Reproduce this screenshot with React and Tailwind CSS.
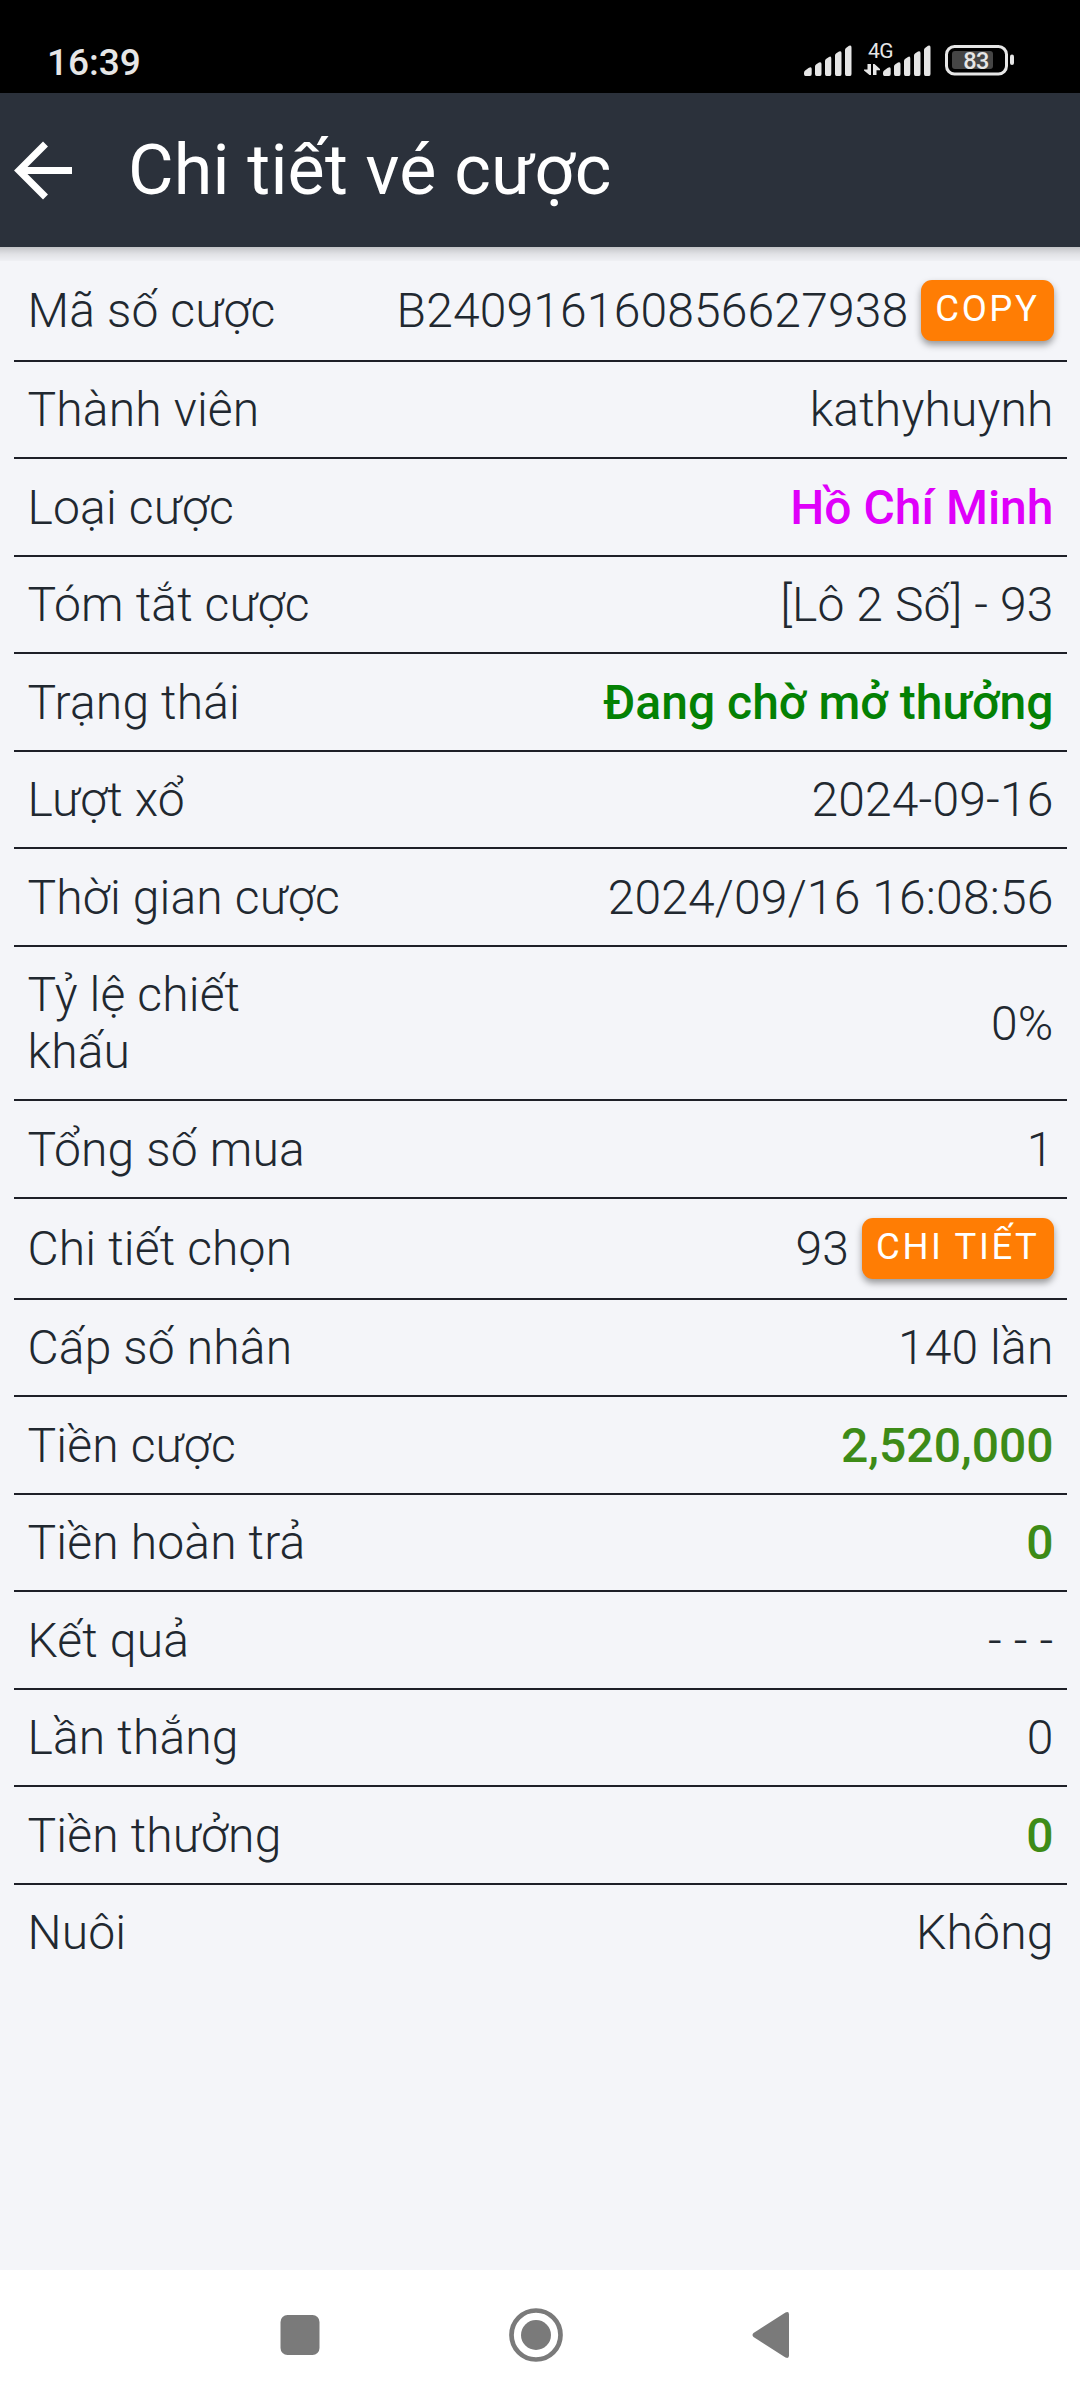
import React from "react";

const DARK = "text-[#212830] font-light tracking-[0.16px]";
const GREEN = "text-[#3d8b17] font-medium";

const rows = [
  { label: "Mã số cược", value: "B240916160856627938", button: "COPY", height: "h-[101px]" },
  { label: "Thành viên", value: "kathyhuynh", height: "h-[97px]" },
  { label: "Loại cược", value: "Hồ Chí Minh", tone: "text-[#df00fa] font-medium", height: "h-[98px]" },
  { label: "Tóm tắt cược", value: "[Lô 2 Số] - 93", height: "h-[97px]" },
  { label: "Trạng thái", value: "Đang chờ mở thưởng", tone: "text-[#048104] font-medium", height: "h-[98px]" },
  { label: "Lượt xổ", value: "2024-09-16", height: "h-[97px]" },
  { label: "Thời gian cược", value: "2024/09/16 16:08:56", height: "h-[98px]" },
  { label: "Tỷ lệ chiết khấu", value: "0%", height: "h-[154px]" },
  { label: "Tổng số mua", value: "1", height: "h-[98px]" },
  { label: "Chi tiết chọn", value: "93", button: "CHI TIẾT", height: "h-[101px]" },
  { label: "Cấp số nhân", value: "140 lần", height: "h-[97px]" },
  { label: "Tiền cược", value: "2,520,000", tone: GREEN, height: "h-[98px]" },
  { label: "Tiền hoàn trả", value: "0", tone: GREEN, height: "h-[97px]" },
  { label: "Kết quả", value: "- - -", height: "h-[98px]" },
  { label: "Lần thắng", value: "0", height: "h-[97px]" },
  { label: "Tiền thưởng", value: "0", tone: GREEN, height: "h-[98px]" },
  { label: "Nuôi", value: "Không", height: "h-[95px]", last: true },
];

function SignalBars() {
  return (
    <svg width="48" height="31" viewBox="0 0 48 31" fill="#e6e6e6">
      <path d="M0 28Q0 26.5 1.2 25.6L4.5 23Q7.7 21 7.7 24V29Q7.7 31 6 31H1.5Q0 31 0 29Z" />
      <path d="M11 21.5Q11 20 12.3 19.2L15 17.5Q17.5 16.5 17.5 19V29Q17.5 31 16 31H12.5Q11 31 11 29Z" />
      <path d="M21 16Q21 14.6 22.3 13.8L25 12Q27.3 10.8 27.3 13.4V29Q27.3 31 25.8 31H22.5Q21 31 21 29Z" />
      <path d="M31 10.5Q31 9 32.3 8.2L35 6.5Q37.5 5.3 37.5 8V29Q37.5 31 36 31H32.5Q31 31 31 29Z" />
      <path d="M41 5Q41 3.6 42.3 2.7L45 .8Q47.5-.5 47.5 2.4V29Q47.5 31 46 31H42.5Q41 31 41 29Z" />
    </svg>
  );
}

function StatusBar() {
  return (
    <div className="flex h-[93px] items-start justify-between bg-black pl-[47px] pr-[66px] text-[#e6e6e6]">
      <span className="mt-[42px] text-[37px] font-medium leading-[42px]">16:39</span>
      <div className="mt-[42px] flex h-[34px] items-end">
        <SignalBars />
        <div className="relative ml-[12px] h-[34px] w-[19px]">
          <span className="absolute left-[4px] top-[-1px] text-[21px] leading-[21px] tracking-[-0.5px]">4G</span>
          <svg className="absolute left-0 top-[22px]" width="16" height="12" viewBox="0 0 16 12" fill="#e6e6e6">
            <path d="M3.5 0H7V11H5.5L0 6.5V5.5H3.5Z" />
            <path d="M9 0H10.5L16 5V6.3H12.5V11H9Z" />
          </svg>
        </div>
        <SignalBars />
        <svg className="ml-[14px]" width="69" height="31" viewBox="0 0 69 31">
          <rect x="1.5" y="1.5" width="60" height="27.5" rx="8" fill="none" stroke="#e6e6e6" strokeWidth="3" />
          <rect x="7" y="6" width="41" height="18" rx="3" fill="#454545" />
          <rect x="65" y="9.5" width="4" height="10.5" rx="2" fill="#e6e6e6" />
          <text x="31" y="24" textAnchor="middle" fontSize="23.5" fontWeight="500" letterSpacing="-0.5" fill="#e6e6e6">83</text>
        </svg>
      </div>
    </div>
  );
}

function Header() {
  return (
    <header className="flex h-[154px] items-center bg-[#2b313b]">
      <svg className="ml-[14px]" width="59" height="60" viewBox="0 0 59 60" fill="none" stroke="#fff" strokeWidth="7">
        <path d="M58 30.5H7M31.5 4L5 30.5L31.5 57" />
      </svg>
      <h1 className="ml-[55px] text-[70px] font-normal leading-[80px] tracking-[0.2px] text-white">Chi tiết vé cược</h1>
    </header>
  );
}

function Row({ label, value, tone, button, height, last }) {
  return (
    <div
      className={`flex shrink-0 items-center justify-between pl-[13.5px] pr-[13.5px] text-[48px] leading-[57px] ${height} ${
        last ? "" : "border-b-2 border-[#1e2028]"
      }`}
    >
      <div className={`${DARK} ${label.startsWith("Tỷ") ? "w-[300px]" : "whitespace-nowrap"}`}>{label}</div>
      <div className={`flex items-center whitespace-nowrap ${tone || DARK}`}>
        <span>{value}</span>
        {button && (
          <button className="ml-[13px] flex h-[61px] items-center rounded-[11px] bg-[#ff7d04] px-[14px] pb-[4px] text-[36.5px] font-normal leading-[42px] tracking-[2.6px] text-white shadow-[0_4px_7px_rgba(0,0,0,0.38)]">
            {button}
          </button>
        )}
      </div>
    </div>
  );
}

function NavBar() {
  return (
    <nav className="flex h-[130px] items-center bg-white pl-[280px]">
      <svg width="40" height="40" viewBox="0 0 40 40" fill="#7a7a7a">
        <rect x=".5" width="39" height="40" rx="7" />
      </svg>
      <svg className="ml-[189px]" width="54" height="54" viewBox="0 0 54 54">
        <circle cx="27" cy="27" r="24.5" fill="none" stroke="#7a7a7a" strokeWidth="4.7" />
        <circle cx="27" cy="27" r="15" fill="#7a7a7a" />
      </svg>
      <svg className="ml-[189px]" width="38" height="48" viewBox="0 0 38 48" fill="#7a7a7a">
        <path d="M1.5 22L33.5 1.5Q37 0 37 3.5V44.5Q37 48 33.5 46.5L1.5 26Q-.5 24 1.5 22Z" />
      </svg>
    </nav>
  );
}

export default function App() {
  return (
    <div className="flex h-[2400px] w-[1080px] flex-col overflow-hidden bg-[#f4f5f9] font-[Roboto,sans-serif]">
      <StatusBar />
      <Header />
      <div className="h-[14px] shrink-0 bg-linear-to-b from-black/20 via-black/8 to-black/2" />
      <main className="flex grow flex-col pl-[14px] pr-[13px]">
        {rows.map((row) => (
          <Row key={row.label} {...row} />
        ))}
      </main>
      <NavBar />
    </div>
  );
}
